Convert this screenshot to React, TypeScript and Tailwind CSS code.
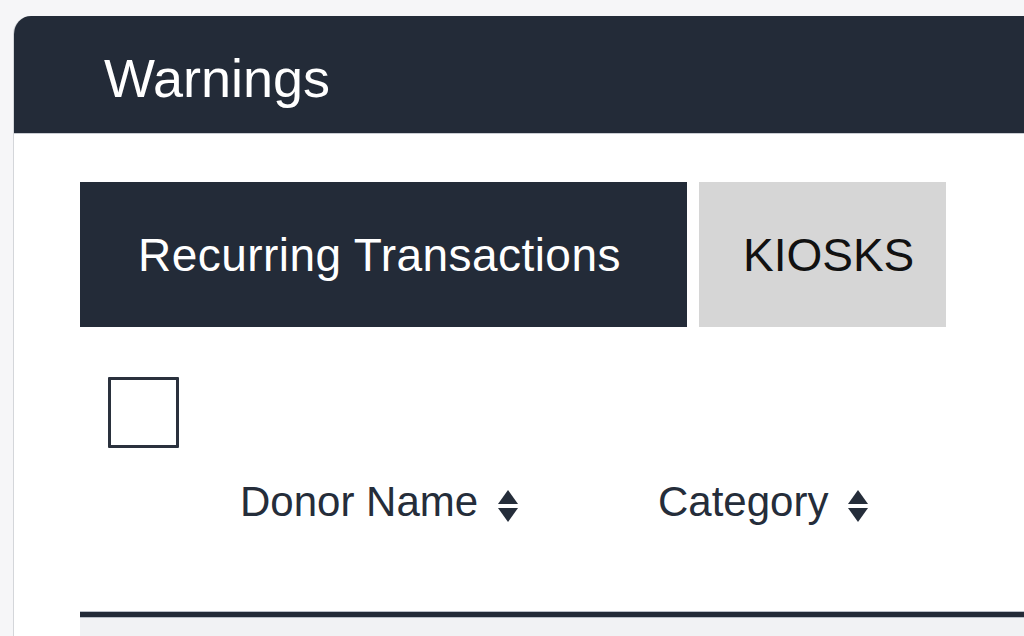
import * as React from 'react';

function SortIcon() {
  return (
    <svg width="20" height="32" viewBox="0 0 20 32" className="mt-[7px] shrink-0" fill="#252d3a">
      <path d="M10 0 L20 14 L0 14 Z" />
      <path d="M0 18 L20 18 L10 32 Z" />
    </svg>
  );
}

export default function App() {
  const font = { fontFamily: '"Liberation Sans", Arial, sans-serif' };

  return (
    <div className="h-[636px] w-[1024px] overflow-hidden bg-[#f6f6f8]" style={font}>
      <div className="ml-[13px] mt-[16px] w-[1040px] rounded-tl-[18px] overflow-hidden border-l border-[#d4d6da] bg-white">
        {/* Header */}
        <div className="h-[118px] bg-[#232b38] pl-[90px] pt-[35px] border-b border-[#c9ccd2]">
          <h1 className="text-[54px] leading-none text-white">Warnings</h1>
        </div>

        <div className="pl-[66px] pt-[48px]">
          {/* Tabs */}
          <div className="flex gap-[12px]">
            <button className="h-[145px] w-[607px] bg-[#232b38] pl-[58px] flex items-center text-[46px] leading-none tracking-[0.45px] text-white">
              Recurring Transactions
            </button>
            <button className="h-[145px] w-[247px] bg-[#d6d6d6] pl-[44px] flex items-center text-[46px] leading-none text-[#111]">
              KIOSKS
            </button>
          </div>

          {/* Select all */}
          <div className="pt-[50px] pl-[28px]">
            <div className="h-[71px] w-[71px] border-[3px] border-[#2a313d] rounded-[1px]" />
          </div>

          {/* Table header */}
          <div className="flex pl-[160px] pt-[33px] pb-[88px] text-[42px] leading-none text-[#252d3a]">
            <div className="w-[418px] flex items-center gap-[20px]">
              <span>Donor Name</span>
              <SortIcon />
            </div>
            <div className="flex items-center gap-[20px]">
              <span>Category</span>
              <SortIcon />
            </div>
          </div>
          <div className="h-[7px] bg-[#232b38] border-y border-[#b9bec7]" />
          <div className="h-[40px] bg-[#f1f2f4]" />
        </div>
      </div>
    </div>
  );
}
